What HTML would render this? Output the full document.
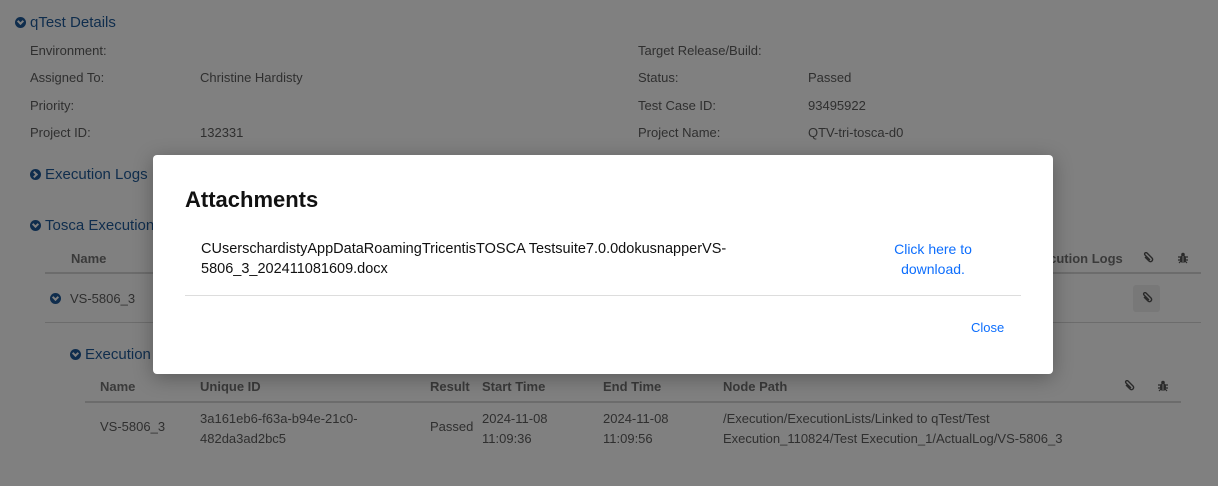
<!DOCTYPE html>
<html><head><style>
body{margin:0;width:1218px;height:486px;background:#808080;font-family:"Liberation Sans",sans-serif;position:relative;overflow:hidden;color:#333}
.a{position:absolute;white-space:nowrap;font-size:13px;color:#2f2f2f}
.h{position:absolute;font-size:15px;color:#0f2d4d;white-space:nowrap}
.ic{display:inline-block;width:11px;height:11px;border-radius:50%;background:#0f2d4d;vertical-align:-1px;margin-right:4px;position:relative}
.ic:after{content:"";position:absolute;left:3px;top:2px;width:3px;height:3px;border-right:2px solid #808080;border-bottom:2px solid #808080;transform:rotate(45deg)}
.ic.r:after{transform:rotate(-45deg);left:2px;top:3px}
.th{font-weight:bold;color:#3a3a3a}
.line{position:absolute;height:2px;background:#6c6c6c}
.modal{position:absolute;left:153px;top:155px;width:900px;height:219px;background:#fff;border-radius:4px;box-shadow:0 4px 20px rgba(0,0,0,.3)}
svg.i{position:absolute}
</style></head><body>
<svg width="0" height="0" style="position:absolute"><defs>
<symbol id="clip" viewBox="0 0 12 12"><path d="M3 5 L7 9 A2 2 0 0 0 10 6 L5 1 A1.3 1.3 0 0 0 3 3 L8 8" fill="none" stroke="#2a2a2a" stroke-width="1.4"/></symbol>
<symbol id="bug" viewBox="0 0 12 12"><ellipse cx="6" cy="7" rx="3" ry="4" fill="#2a2a2a"/><circle cx="6" cy="2.5" r="1.8" fill="#2a2a2a"/><path d="M1 5h10M1 8h10M2 11l2-2M10 11l-2-2" stroke="#2a2a2a" stroke-width="1.2"/><path d="M6 4v7" stroke="#808080" stroke-width=".8"/></symbol>
</defs></svg>
<div class="h" style="left:15px;top:14px"><span class="ic"></span>qTest Details</div>
<div class="a" style="left:30px;top:43px">Environment:</div>
<div class="a" style="left:30px;top:70px">Assigned To:</div><div class="a" style="left:200px;top:70px">Christine Hardisty</div>
<div class="a" style="left:30px;top:98px">Priority:</div>
<div class="a" style="left:30px;top:125px">Project ID:</div><div class="a" style="left:200px;top:125px">132331</div>
<div class="a" style="left:638px;top:43px">Target Release/Build:</div>
<div class="a" style="left:638px;top:70px">Status:</div><div class="a" style="left:808px;top:70px">Passed</div>
<div class="a" style="left:638px;top:98px">Test Case ID:</div><div class="a" style="left:808px;top:98px">93495922</div>
<div class="a" style="left:638px;top:125px">Project Name:</div><div class="a" style="left:808px;top:125px">QTV-tri-tosca-d0</div>
<div class="h" style="left:30px;top:166px"><span class="ic r"></span>Execution Logs</div>
<div class="h" style="left:30px;top:217px"><span class="ic"></span>Tosca Execution</div>
<div class="a th" style="left:71px;top:251px">Name</div>
<div class="a th" style="left:1026px;top:251px">Execution Logs</div>
<svg class="i" style="left:1142px;top:252px" width="12" height="12"><use href="#clip"/></svg>
<svg class="i" style="left:1177px;top:252px" width="12" height="12"><use href="#bug"/></svg>
<div class="line" style="left:45px;top:272px;width:1156px"></div>
<div class="a" style="left:50px;top:291px"><span class="ic"></span></div><div class="a" style="left:70px;top:291px">VS-5806_3</div>
<div style="position:absolute;left:1133px;top:285px;width:27px;height:27px;background:#787878;border-radius:3px"></div>
<svg class="i" style="left:1141px;top:292px" width="12" height="12"><use href="#clip"/></svg>
<div class="line" style="left:45px;top:322px;width:1156px;height:1px"></div>
<div class="h" style="left:70px;top:346px"><span class="ic"></span>Execution</div>
<div class="a th" style="left:100px;top:379px">Name</div>
<div class="a th" style="left:200px;top:379px">Unique ID</div>
<div class="a th" style="left:430px;top:379px">Result</div>
<div class="a th" style="left:482px;top:379px">Start Time</div>
<div class="a th" style="left:603px;top:379px">End Time</div>
<div class="a th" style="left:723px;top:379px">Node Path</div>
<svg class="i" style="left:1123px;top:380px" width="12" height="12"><use href="#clip"/></svg>
<svg class="i" style="left:1157px;top:380px" width="12" height="12"><use href="#bug"/></svg>
<div class="line" style="left:85px;top:401px;width:1096px"></div>
<div class="a" style="left:100px;top:419px">VS-5806_3</div>
<div class="a" style="left:200px;top:409px;line-height:20px">3a161eb6-f63a-b94e-21c0-<br>482da3ad2bc5</div>
<div class="a" style="left:430px;top:419px">Passed</div>
<div class="a" style="left:482px;top:409px;line-height:20px">2024-11-08<br>11:09:36</div>
<div class="a" style="left:603px;top:409px;line-height:20px">2024-11-08<br>11:09:56</div>
<div class="a" style="left:723px;top:409px;line-height:20px">/Execution/ExecutionLists/Linked to qTest/Test<br>Execution_110824/Test Execution_1/ActualLog/VS-5806_3</div>
<div class="modal">
<div style="position:absolute;left:32px;top:32px;font-size:22px;font-weight:bold;color:#111">Attachments</div>
<div style="position:absolute;left:48px;top:84px;font-size:14.5px;color:#111;line-height:20px">CUserschardistyAppDataRoamingTricentisTOSCA Testsuite7.0.0dokusnapperVS-<br>5806_3_202411081609.docx</div>
<div style="position:absolute;left:732px;top:84px;width:96px;text-align:center;font-size:14px;color:#0d6efd;line-height:20px">Click here to download.</div>
<div style="position:absolute;left:32px;top:140px;width:836px;height:1px;background:#ddd"></div>
<div style="position:absolute;left:818px;top:165px;font-size:13px;color:#0d6efd">Close</div>
</div>
</body></html>
